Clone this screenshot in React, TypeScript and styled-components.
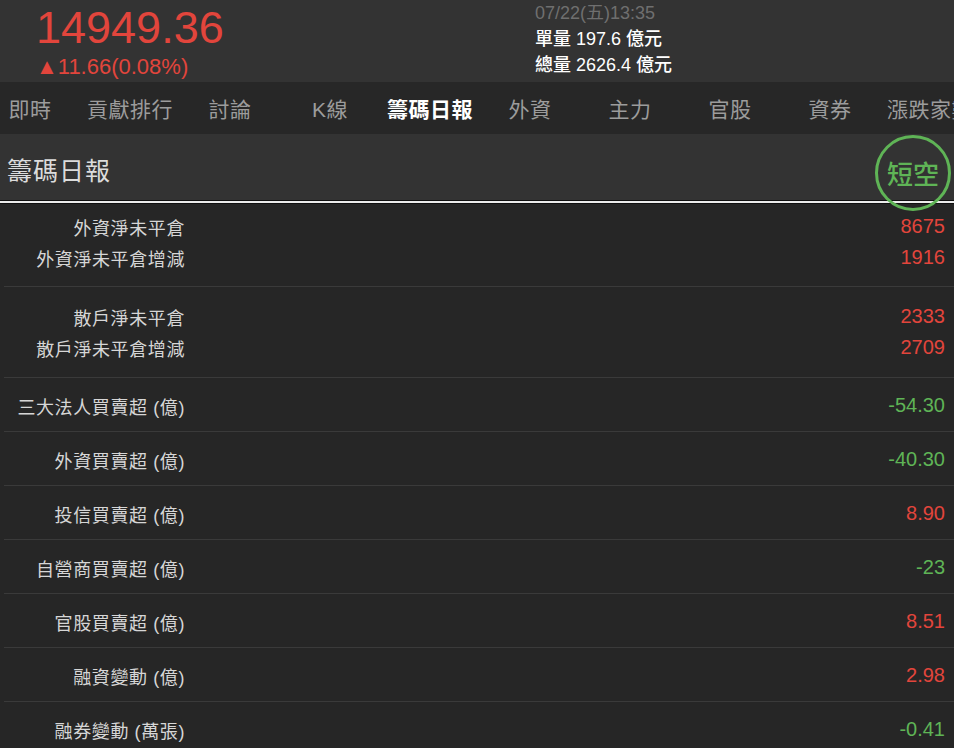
import React from "react";
import styled, { createGlobalStyle } from "styled-components";

const RED = "#e2453c";
const GREEN = "#5fb456";

const GlobalStyle = createGlobalStyle`
  html, body {
    margin: 0;
    padding: 0;
    background: #262626;
  }
  body {
    font-family: "Liberation Sans", "Noto Sans CJK TC", sans-serif;
  }
  * { box-sizing: border-box; }
`;

const Page = styled.div`
  width: 954px;
  height: 748px;
  overflow: hidden;
  background: #262626;
`;

const QuoteHeader = styled.header`
  height: 82px;
  background: #333333;
  display: grid;
  grid-template-columns: 535px 1fr;
`;

const PriceBlock = styled.div`
  padding: 4px 0 0 36px;
  color: ${RED};
`;

const Price = styled.div`
  font-size: 45px;
  line-height: 48px;
`;

const Change = styled.div`
  margin-top: 2px;
  font-size: 22px;
  line-height: 26px;
`;

const VolumeBlock = styled.div`
  padding-top: 0;
`;

const DateLine = styled.div`
  font-size: 18px;
  line-height: 26px;
  color: #6f6f6f;
`;

const VolLine = styled.div`
  font-size: 18px;
  line-height: 26px;
  color: #ffffff;
  font-weight: 500;
`;

const TabBar = styled.nav`
  height: 52px;
  background: #272727;
  overflow: hidden;
  display: flex;
`;

const TabTrack = styled.div`
  display: flex;
  margin-left: -20px;
`;

const Tab = styled.div<{ $active?: boolean }>`
  flex: 0 0 100px;
  height: 52px;
  display: flex;
  align-items: center;
  justify-content: center;
  white-space: nowrap;
  font-size: 21px;
  letter-spacing: 0.5px;
  color: ${(p) => (p.$active ? "#ffffff" : "#9c9c9c")};
  font-weight: ${(p) => (p.$active ? 600 : 400)};
`;

const SectionHeader = styled.div`
  position: relative;
  height: 66px;
  background: #333333;
  display: flex;
  align-items: center;
  padding: 3px 0 0 7px;
`;

const SectionTitle = styled.h2`
  margin: 0;
  font-size: 25px;
  font-weight: 400;
  letter-spacing: 1px;
  color: #dcdcdc;
`;

const Badge = styled.div`
  position: absolute;
  right: 3px;
  top: 1px;
  width: 76px;
  height: 76px;
  border: 3.5px solid ${GREEN};
  border-radius: 50%;
  display: flex;
  align-items: center;
  justify-content: center;
  font-size: 26px;
  font-weight: 500;
  color: ${GREEN};
  z-index: 2;
  padding-bottom: 2px;
`;

const Separator = styled.div`
  height: 4px;
  background: #ececec;
  border-top: 1px solid #111;
  border-bottom: 1px solid #111;
`;

const List = styled.div`
  display: flex;
  flex-direction: column;
`;

const Group = styled.div<{ $pt: number; $pb: number }>`
  margin-left: 4px;
  padding: ${(p) => p.$pt}px 0 ${(p) => p.$pb}px;
  border-bottom: 1px solid #3a3a3a;
`;

const Line = styled.div`
  display: grid;
  grid-template-columns: 181px 1fr;
  height: 31px;
  align-items: center;
`;

const Label = styled.div`
  text-align: right;
  font-size: 18px;
  letter-spacing: 0.6px;
  color: #d6d6d6;
  white-space: nowrap;
`;

const Value = styled.div<{ $up: boolean }>`
  text-align: right;
  padding-right: 9px;
  font-size: 20px;
  color: ${(p) => (p.$up ? RED : GREEN)};
`;

const tabs = ["即時", "貢獻排行", "討論", "K線", "籌碼日報", "外資", "主力", "官股", "資券", "漲跌家數"];

type Item = { label: string; value: string };

const groups: { pt: number; pb: number; items: Item[] }[] = [
  {
    pt: 7,
    pb: 13,
    items: [
      { label: "外資淨未平倉", value: "8675" },
      { label: "外資淨未平倉增減", value: "1916" },
    ],
  },
  {
    pt: 14,
    pb: 14,
    items: [
      { label: "散戶淨未平倉", value: "2333" },
      { label: "散戶淨未平倉增減", value: "2709" },
    ],
  },
  { pt: 12, pb: 10, items: [{ label: "三大法人買賣超 (億)", value: "-54.30" }] },
  { pt: 12, pb: 10, items: [{ label: "外資買賣超 (億)", value: "-40.30" }] },
  { pt: 12, pb: 10, items: [{ label: "投信買賣超 (億)", value: "8.90" }] },
  { pt: 12, pb: 10, items: [{ label: "自營商買賣超 (億)", value: "-23" }] },
  { pt: 12, pb: 10, items: [{ label: "官股買賣超 (億)", value: "8.51" }] },
  { pt: 12, pb: 10, items: [{ label: "融資變動 (億)", value: "2.98" }] },
  { pt: 12, pb: 10, items: [{ label: "融券變動 (萬張)", value: "-0.41" }] },
];

export default function App() {
  return (
    <Page>
      <GlobalStyle />
      <QuoteHeader>
        <PriceBlock>
          <Price>14949.36</Price>
          <Change>▲11.66(0.08%)</Change>
        </PriceBlock>
        <VolumeBlock>
          <DateLine>07/22(五)13:35</DateLine>
          <VolLine>單量 197.6 億元</VolLine>
          <VolLine>總量 2626.4 億元</VolLine>
        </VolumeBlock>
      </QuoteHeader>
      <TabBar>
        <TabTrack>
          {tabs.map((t) => (
            <Tab key={t} $active={t === "籌碼日報"}>
              {t}
            </Tab>
          ))}
        </TabTrack>
      </TabBar>
      <SectionHeader>
        <SectionTitle>籌碼日報</SectionTitle>
        <Badge>短空</Badge>
      </SectionHeader>
      <Separator />
      <List>
        {groups.map((g, i) => (
          <Group key={i} $pt={g.pt} $pb={g.pb}>
            {g.items.map((it) => (
              <Line key={it.label}>
                <Label>{it.label}</Label>
                <Value $up={!it.value.startsWith("-")}>{it.value}</Value>
              </Line>
            ))}
          </Group>
        ))}
      </List>
    </Page>
  );
}
